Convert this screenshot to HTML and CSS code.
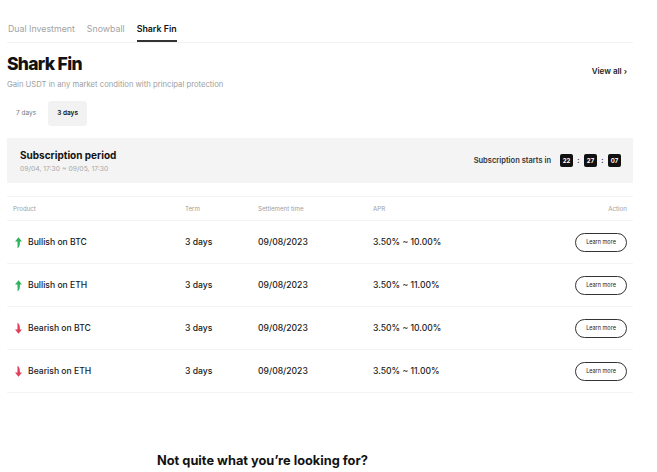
FILE: index.html
```html
<!DOCTYPE html>
<html>

<head>
  <link rel="stylesheet" href="styles.css">
</head>

<body>
  <div class="page">
    <ul class="nav-tabs">
      <li class="nav-tab">Dual Investment</li>
      <li class="nav-tab">Snowball</li>
      <li class="nav-tab active">Shark Fin</li>
    </ul>

    <div class="head">
      <div>
        <h1 class="title">Shark Fin</h1>
        <p class="subtitle">Gain USDT in any market condition with principal protection</p>
      </div>
      <a class="view-all">View all &rsaquo;</a>
    </div>

    <div class="term-tabs">
      <span class="term">7 days</span>
      <span class="term active">3 days</span>
    </div>

    <!-- subscription card -->
    <div class="sub-card">
      <div>
        <div class="sub-title">Subscription period</div>
        <div class="sub-date">09/04, 17:30 ~ 09/05, 17:30</div>
      </div>
      <div class="countdown">
        <span class="countdown-label">Subscription starts in</span>
        <span class="digit">22</span><span class="colon">:</span>
        <span class="digit">27</span><span class="colon">:</span>
        <span class="digit">07</span>
      </div>
    </div>

    <div class="table">
      <div class="row header">
        <div class="c-product">Product</div>
        <div class="c-term">Term</div>
        <div class="c-date">Settlement time</div>
        <div class="c-apr">APR</div>
        <div class="c-action">Action</div>
      </div>

      <div class="row">
        <div class="c-product"><svg class="arrow up" viewBox="0 0 8 12"><path d="M4 0 L8 4.8 L5.6 4.8 L5.6 7 Q5.6 10.2 3.8 12 L2.6 12 Q3.2 9.6 2.8 6.8 L2.8 4.8 L0 4.8 Z"/></svg>Bullish on BTC</div>
        <div class="c-term">3 days</div>
        <div class="c-date">09/08/2023</div>
        <div class="c-apr">3.50% ~ 10.00%</div>
        <div class="c-action"><button class="learn">Learn more</button></div>
      </div>

      <div class="row">
        <div class="c-product"><svg class="arrow up" viewBox="0 0 8 12"><path d="M4 0 L8 4.8 L5.6 4.8 L5.6 7 Q5.6 10.2 3.8 12 L2.6 12 Q3.2 9.6 2.8 6.8 L2.8 4.8 L0 4.8 Z"/></svg>Bullish on ETH</div>
        <div class="c-term">3 days</div>
        <div class="c-date">09/08/2023</div>
        <div class="c-apr">3.50% ~ 11.00%</div>
        <div class="c-action"><button class="learn">Learn more</button></div>
      </div>

      <div class="row">
        <div class="c-product"><svg class="arrow down" viewBox="0 0 8 12"><path d="M4 12 L8 7.2 L5.6 7.2 L5.6 5 Q5.6 1.8 3.8 0 L2.6 0 Q3.2 2.4 2.8 5.2 L2.8 7.2 L0 7.2 Z"/></svg>Bearish on BTC</div>
        <div class="c-term">3 days</div>
        <div class="c-date">09/08/2023</div>
        <div class="c-apr">3.50% ~ 10.00%</div>
        <div class="c-action"><button class="learn">Learn more</button></div>
      </div>

      <div class="row">
        <div class="c-product"><svg class="arrow down" viewBox="0 0 8 12"><path d="M4 12 L8 7.2 L5.6 7.2 L5.6 5 Q5.6 1.8 3.8 0 L2.6 0 Q3.2 2.4 2.8 5.2 L2.8 7.2 L0 7.2 Z"/></svg>Bearish on ETH</div>
        <div class="c-term">3 days</div>
        <div class="c-date">09/08/2023</div>
        <div class="c-apr">3.50% ~ 11.00%</div>
        <div class="c-action"><button class="learn">Learn more</button></div>
      </div>
    </div>

    <h2 class="not-quite">Not quite what you&rsquo;re looking for?</h2>
  </div>
</body>

</html>
```

FILE: styles.css
```css
body {
  margin: 0;
  background: #fff;
  font-family: Inter, "Noto Sans", sans-serif;
  color: #121212;
}

.page {
  width: 626px;
  padding: 21px 0 0 7px;
}

/* top tabs */
.nav-tabs {
  display: flex;
  list-style-type: none;
  margin: 0;
  padding: 0 0 0 1px;
  gap: 12px;
  border-bottom: 1px solid #f2f2f2;
}

.nav-tab {
  font-size: 8.8px;
  color: #a3a3a3;
  height: 21px;
  line-height: 16px;
  border-bottom: 2px solid transparent;
  box-sizing: border-box;
}

.nav-tab.active {
  color: #121212;
  font-weight: 600;
  border-bottom-color: #333;
}

/* heading */
.head {
  display: flex;
  justify-content: space-between;
  align-items: center;
  margin-top: 9px;
}

.title {
  margin: 0;
  font-size: 17.5px;
  line-height: 23px;
  font-weight: 800;
  letter-spacing: -0.7px;
}

.subtitle {
  margin: 5px 0 0;
  font-size: 7.7px;
  color: #a0a0a0;
}

.view-all {
  font-size: 8px;
  font-weight: 600;
  color: #222;
  margin-right: 6px;
}

/* 7 / 3 days */
.term-tabs {
  display: flex;
  margin-top: 12px;
  gap: 3px;
}

.term {
  font-size: 6.5px;
  height: 25px;
  line-height: 25px;
  padding: 0 9px;
  border-radius: 3px;
  color: #777;
}

.term.active {
  background: #f2f2f2;
  color: #121212;
  font-weight: 600;
}

/* subscription card */
.sub-card {
  display: flex;
  justify-content: space-between;
  align-items: center;
  background: #f4f4f4;
  height: 45px;
  margin-top: 12px;
  padding: 0 12px 0 13px;
}

.sub-title {
  font-size: 10px;
  font-weight: 700;
  line-height: 13px;
}

.sub-date {
  font-size: 6.8px;
  color: #a8a8a8;
  margin-top: 2px;
}

.countdown {
  display: flex;
  align-items: center;
}

.countdown-label {
  font-size: 7.5px;
  font-weight: 600;
  color: #333;
  margin-right: 9px;
}

.digit {
  display: inline-block;
  width: 13px;
  height: 13px;
  line-height: 13px;
  text-align: center;
  background: #111;
  color: #fff;
  border-radius: 2px;
  font-size: 6px;
  font-weight: 700;
}

.colon {
  width: 11px;
  text-align: center;
  font-size: 7px;
  font-weight: 700;
  color: #333;
}

/* table */
.table {
  margin-top: 13px;
}

.row {
  display: flex;
  align-items: center;
  height: 42px;
  border-bottom: 1px solid #f4f4f4;
  font-size: 8.6px;
  font-weight: 500;
  color: #1a1a1a;
}

.row > div {
  box-sizing: border-box;
}

.row.header {
  height: 23px;
  border-top: 1px solid #f4f4f4;
  font-size: 6.2px;
  font-weight: 400;
  color: #a0a0a0;
}

.c-product {
  width: 178px;
  padding-left: 6px;
  display: flex;
  align-items: center;
}

.c-term {
  width: 73px;
}

.c-date {
  width: 115px;
}

.c-apr {
  flex: 1;
}

.c-action {
  width: 80px;
  text-align: right;
  padding-right: 6px;
}

.row:not(.header) .c-product {
  padding-left: 8px;
}

.arrow {
  width: 7px;
  height: 11px;
  margin-right: 6px;
}

.arrow.up {
  fill: #2eb360;
}

.arrow.down {
  fill: #e33f5c;
}

.learn {
  font-family: inherit;
  font-size: 5.5px;
  color: #222;
  background: #fff;
  border: 1px solid #333;
  border-radius: 10px;
  width: 52px;
  height: 19px;
  padding: 0;
}

.not-quite {
  margin: 60px 0 0 150px;
  font-size: 12.8px;
  font-weight: 700;
}
```
